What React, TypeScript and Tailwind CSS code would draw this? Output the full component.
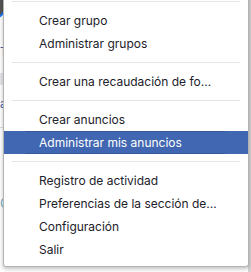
import React from "react";

type Item = { label: string; active?: boolean } | { sep: true };

const items: Item[] = [
  { sep: true },
  { label: "Crear grupo" },
  { label: "Administrar grupos" },
  { sep: true },
  { label: "Crear una recaudación de fo..." },
  { sep: true },
  { label: "Crear anuncios" },
  { label: "Administrar mis anuncios", active: true },
  { sep: true },
  { label: "Registro de actividad" },
  { label: "Preferencias de la sección de..." },
  { label: "Configuración" },
  { label: "Salir" },
];

export default function App() {
  return (
    <div
      className="relative w-[251px] h-[272px] overflow-hidden bg-white flex justify-between"
      style={{ fontFamily: "Inter, 'Liberation Sans', sans-serif" }}
    >
      {/* page content behind the menu, left strip */}
      <div className="w-[8px] flex flex-col items-start">
        <div className="ml-[-22px] mt-[-8px] w-[28px] h-[28px] shrink-0 rounded-full border-2 border-[#1877f2] bg-[#555]" />
        <div className="mt-[26px] text-[11px] leading-none text-[#4267b2]">T</div>
        <div className="mt-[16px] w-[6px] h-[12px] bg-[#e4e6ea]" />
        <div className="mt-[14px] text-[11px] leading-none text-[#4267b2]">a</div>
        <div className="mt-[17px] w-[6px] h-px bg-[#ddd]" />
        <div className="mt-[69px] text-[13px] leading-none text-[#7ab0c8]">G</div>
      </div>
      <div className="w-[3px] h-full bg-[#d4d4d4]" />

      {/* dropdown menu */}
      <div className="absolute left-[3px] top-[-8px] w-[246px] bg-white border-x border-b border-[#b4b4b4] rounded-b-[3px] shadow-[0_2px_4px_rgba(0,0,0,0.25)] pt-[2px] pb-[5px] flex flex-col">
        {items.map((it, i) =>
          "sep" in it ? (
            <div key={i} className="py-[7px] px-[8px]">
              <div className="h-px bg-[#e5e5e5]" />
            </div>
          ) : it.active ? (
            <div key={i} className="h-[23px] bg-[#4267b2] px-[22px] pr-[23px] flex">
              <div className="flex-1 flex items-center pl-[13px] border-y border-[#365899] text-[12px] text-white whitespace-nowrap">
                {it.label}
              </div>
            </div>
          ) : (
            <div
              key={i}
              className="h-[23px] flex items-center pl-[35px] text-[12px] text-[#1d2129] whitespace-nowrap"
            >
              {it.label}
            </div>
          )
        )}
      </div>
    </div>
  );
}
